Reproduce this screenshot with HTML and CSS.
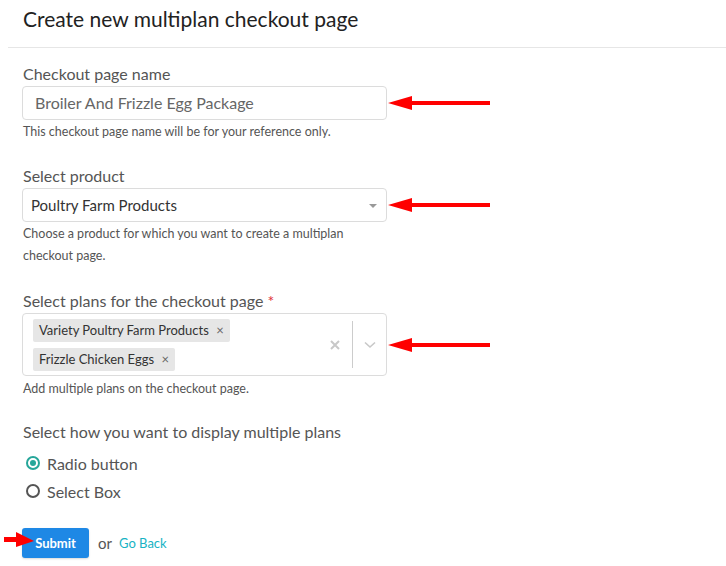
FILE: index.html
```html
<!DOCTYPE html>
<html>
<head>
<meta charset="utf-8">
<link rel="stylesheet" href="styles.css">
</head>
<body>
<div class="page">
  <header class="head">
    <h1 class="title">Create new multiplan checkout page</h1>
  </header>
  <form class="form">
    <div class="group g1">
      <label class="label">Checkout page name</label>
      <div class="row">
        <div class="control input">Broiler And Frizzle Egg Package</div>
        <svg class="arrow" width="104" height="16" viewBox="0 0 104 16"><path d="M0 8 L24 1 L24 6 L102 6 L102 10 L24 10 L24 15 Z" fill="#ff0000"/></svg>
      </div>
      <p class="help">This checkout page name will be for your reference only.</p>
    </div>
    <div class="group">
      <label class="label">Select product</label>
      <div class="row">
        <div class="control select">Poultry Farm Products<span class="caret"></span></div>
        <svg class="arrow" width="104" height="16" viewBox="0 0 104 16"><path d="M0 8 L24 1 L24 6 L102 6 L102 10 L24 10 L24 15 Z" fill="#ff0000"/></svg>
      </div>
      <p class="help">Choose a product for which you want to create a multiplan<br>checkout page.</p>
    </div>
    <div class="group g3">
      <label class="label">Select plans for the checkout page <span class="req">*</span></label>
      <div class="row">
        <div class="control multi">
          <div class="tags">
            <span class="tag">Variety Poultry Farm Products <span class="tx">×</span></span>
            <span class="tag">Frizzle Chicken Eggs <span class="tx">×</span></span>
          </div>
          <div class="indicators">
            <svg class="clear" width="10" height="10" viewBox="0 0 10 10"><path d="M1 1 L9 9 M9 1 L1 9" stroke="#c8c8c8" stroke-width="2"/></svg>
            <span class="sep"></span>
            <svg class="chev" width="12" height="8" viewBox="0 0 12 8"><path d="M1 1.5 L6 6 L11 1.5" stroke="#c8c8c8" stroke-width="1.6" fill="none"/></svg>
          </div>
        </div>
        <svg class="arrow" width="104" height="16" viewBox="0 0 104 16"><path d="M0 8 L24 1 L24 6 L102 6 L102 10 L24 10 L24 15 Z" fill="#ff0000"/></svg>
      </div>
      <p class="help h3">Add multiple plans on the checkout page.</p>
    </div>
    <div class="group last">
      <label class="label">Select how you want to display multiple plans</label>
      <div class="radios">
        <div class="radio-row"><span class="radio on"></span>Radio button</div>
        <div class="radio-row"><span class="radio"></span>Select Box</div>
      </div>
    </div>
    <div class="actions">
      <span class="btn-wrap">
        <svg class="btn-arrow" width="32" height="16" viewBox="0 0 32 16"><path d="M31 10 L13 1 L13 6 L1 6 L1 11 L13 11 L13 16 Z" fill="#ff0000"/></svg>
        <button type="button" class="submit">Submit</button>
      </span>
      <span class="or">or</span>
      <a class="back">Go Back</a>
    </div>
  </form>
</div>
</body>
</html>
```
FILE: styles.css
```css
* { box-sizing: border-box; }
html, body { margin: 0; padding: 0; background: #fff; }
body {
  font-family: Lato, "Open Sans", sans-serif;
  color: #555;
  width: 726px;
  height: 566px;
  overflow: hidden;
}
.head {
  margin-left: 8px;
  height: 48px;
  border-bottom: 1px solid #e6e6e6;
  padding: 6px 0 0 15px;
}
.title {
  margin: 0;
  font-size: 21px;
  line-height: 26px;
  font-weight: 400;
  color: #222;
}
.form { padding: 16px 0 0 22px; }
.group { margin-bottom: 24px; }
.group.g1 { margin-bottom: 23px; }
.group.g3 { margin-bottom: 22px; }
.group.last { margin-bottom: 23px; }
.label {
  display: block;
  font-size: 16px;
  line-height: 20px;
  color: #555;
  padding-left: 1px;
}
.req { color: #e0303a; }
.row {
  display: flex;
  align-items: center;
  margin-top: 2px;
}
.control {
  width: 365px;
  border: 1px solid #dcdcdc;
  border-radius: 4px;
  background: #fff;
}
.input {
  height: 34px;
  padding: 0 12px;
  font-size: 16px;
  line-height: 32px;
  color: #666;
}
.select {
  height: 34px;
  padding: 0 8px;
  font-size: 15px;
  line-height: 32px;
  color: #333;
  display: flex;
  justify-content: space-between;
  align-items: center;
}
.caret {
  width: 0; height: 0;
  border-left: 4px solid transparent;
  border-right: 4px solid transparent;
  border-top: 4px solid #999;
  margin-right: 1px;
  margin-top: 2px;
}
.arrow { margin-left: 1px; flex: none; }
.help {
  margin: 1px 0 0;
  font-size: 12.5px;
  line-height: 22px;
  color: #555;
  padding-left: 1px;
}
.help.h3 { margin-top: 2px; }
.multi {
  height: 63px;
  display: flex;
  justify-content: space-between;
  align-items: center;
  padding: 3px 0 3px 10px;
}
.tags {
  display: flex;
  flex-direction: column;
  align-items: flex-start;
  gap: 6px;
}
.tag {
  background: #e6e6e6;
  border-radius: 2px;
  font-size: 13px;
  line-height: 23px;
  color: #333;
  padding: 0 6px;
}
.tx { color: #666; font-size: 13px; margin-left: 4px; }
.indicators {
  display: flex;
  align-items: center;
  height: 100%;
}
.clear { margin-right: 12px; }
.sep {
  width: 1px;
  height: 47px;
  background: #ccc;
}
.chev { margin: 0 10px 0 11px; }
.radios { margin-top: 7px; }
.radio-row {
  display: flex;
  align-items: center;
  height: 28px;
  font-size: 16px;
  color: #555;
  padding-left: 4px;
}
.radio {
  width: 14px;
  height: 14px;
  border: 2px solid #555;
  border-radius: 50%;
  margin-right: 7px;
  position: relative;
}
.radio.on { border-color: #26a69a; }
.radio.on::after {
  content: "";
  position: absolute;
  left: 2px; top: 2px;
  width: 6px; height: 6px;
  border-radius: 50%;
  background: #26a69a;
}
.actions {
  display: flex;
  align-items: center;
}
.btn-wrap { position: relative; display: inline-block; }
.btn-arrow { position: absolute; left: -19px; top: 3px; z-index: 2; }
.submit {
  width: 67px;
  height: 30px;
  border: 0;
  border-radius: 3px;
  background: #1e88e5;
  color: #fff;
  font-family: Lato, sans-serif;
  font-weight: 700;
  font-size: 13px;
  padding: 0;
  box-shadow: 0 1px 2px rgba(0,0,0,0.15);
}
.or { margin-left: 9px; font-size: 15px; color: #555; }
.back { margin-left: 7px; font-size: 13px; color: #17b3c4; }
```
